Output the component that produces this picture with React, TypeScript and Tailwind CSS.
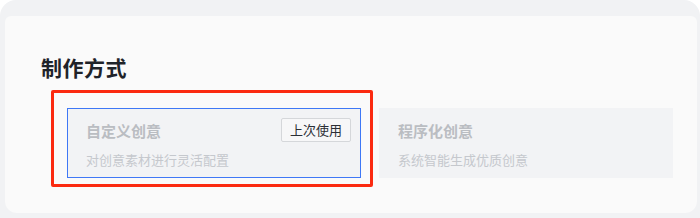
import React from 'react'

const font = { fontFamily: '"Noto Sans CJK SC", "Noto Sans", sans-serif' }

const modes = [
  { title: '自定义创意', desc: '对创意素材进行灵活配置', active: true },
  { title: '程序化创意', desc: '系统智能生成优质创意', active: false },
]

export default function App() {
  return (
    <div className="w-[700px] h-[218px] bg-[#f1f2f4] rounded-t-2xl pt-4 pl-[5px] pr-[3px] pb-[5px]" style={font}>
      <div className="h-full bg-[#fafafa] rounded-t-[6px] rounded-b-xl pl-9 pt-[37px]">
        <h2 className="text-[21px] leading-[28px] font-bold text-[#1f2329] tracking-[0.5px]">制作方式</h2>

        <div className="relative mt-[27px] ml-[26px] grid grid-cols-[294px_294px] gap-x-[18px]">
          {/* annotation box */}
          <div className="absolute left-[-16px] top-[-18px] w-[322px] h-[97px] border-[3px] border-[#fb2a10] rounded-[2px] pointer-events-none" />

          {modes.map((m) => (
            <div
              key={m.title}
              className={`relative h-[70px] bg-[#f2f3f5] px-[18px] pt-[11px] ${
                m.active ? 'border border-[#3f78f6]' : 'border border-transparent'
              }`}
            >
              <div className="text-[15px] leading-[22px] font-semibold text-[#babdc2]">{m.title}</div>
              <div className="mt-[8px] text-[13px] leading-[20px] text-[#c5c8cd]">{m.desc}</div>
              {m.active && (
                <span className="absolute top-[9px] right-[9px] h-[24px] w-[70px] flex items-center justify-center bg-[#f7f7f8] border border-[#d5d7da] rounded-[2px] text-[13px] text-[#2b2f36]">
                  上次使用
                </span>
              )}
            </div>
          ))}
        </div>
      </div>
    </div>
  )
}
